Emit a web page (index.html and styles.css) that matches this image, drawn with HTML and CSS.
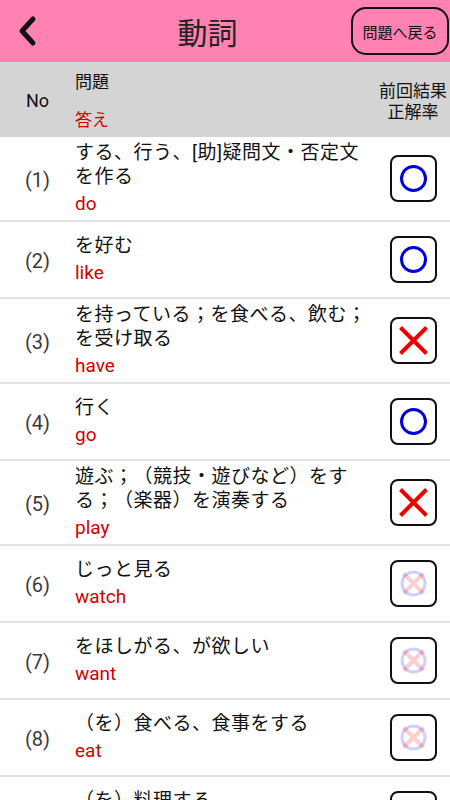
FILE: index.html
```html
<!DOCTYPE html>
<html lang="ja">

<head>
    <meta charset="UTF-8">
    <meta name="viewport" content="width=device-width, initial-scale=1.0">
    <title>動詞</title>
    <link rel="stylesheet" href="styles.css">
</head>

<body>

    <div class="topbar">
        <div class="back">
            <svg width="20" height="32" viewBox="0 0 20 32">
                <path d="M15 4 L4 16 L15 28" fill="none" stroke="#111" stroke-width="5" stroke-linecap="round"
                    stroke-linejoin="round" />
            </svg>
        </div>
        <div class="title">動詞</div>
        <button class="return-btn">問題へ戻る</button>
    </div>

    <div class="list-head">
        <div class="col-no">No</div>
        <div class="col-q">
            <div>問題</div>
            <div class="red">答え</div>
        </div>
        <div class="col-res">前回結果<br>正解率</div>
    </div>

    <div id="list"></div>

    <script>
        var words = [
            ["する、行う、[助]疑問文・否定文を作る", "do", "ok"],
            ["を好む", "like", "ok"],
            ["を持っている；を食べる、飲む；を受け取る", "have", "ng"],
            ["行く", "go", "ok"],
            ["遊ぶ；（競技・遊びなど）をする；（楽器）を演奏する", "play", "ng"],
            ["じっと見る", "watch", "none"],
            ["をほしがる、が欲しい", "want", "none"],
            ["（を）食べる、食事をする", "eat", "none"],
            ["（を）料理する", "cook", "none"]
        ];

        var circle = '<circle cx="23.5" cy="23.5" r="12" fill="none" stroke="#0000dd" stroke-width="3"/>';
        var cross = '<path d="M10.5 10.5 L36.5 36.5 M36.5 10.5 L10.5 36.5" stroke="#ee0000" stroke-width="4"/>';
        var faded = '<circle cx="23.5" cy="23.5" r="11.5" fill="none" stroke="#1010e0" stroke-width="3" opacity="0.2"/>' +
            '<path d="M13.5 13.5 L33.5 33.5 M33.5 13.5 L13.5 33.5" stroke="#f02030" stroke-width="4" opacity="0.22"/>';

        var html = '';
        words.forEach(function (w, i) {
            var mark = w[2] === 'ok' ? circle : (w[2] === 'ng' ? cross : faded);
            html += `<div class="row">
                <div class="col-no num">(${i + 1})</div>
                <div class="col-q">
                    <div class="question">${w[0]}</div>
                    <div class="answer">${w[1]}</div>
                </div>
                <div class="col-res">
                    <div class="mark"><svg width="47" height="47" viewBox="0 0 47 47">${mark}</svg></div>
                </div>
            </div>`;
        });
        document.getElementById('list').innerHTML = html;
    </script>

</body>

</html>
```

FILE: styles.css
```css
body {
    font-family: Roboto, "Noto Sans CJK JP", sans-serif;
    margin: 0;
    padding: 0;
    background-color: #fff;
    color: #111;
    text-spacing-trim: space-all;
}

.topbar {
    height: 62px;
    background-color: #ff82b2;
    display: flex;
    align-items: center;
}

.back {
    width: 60px;
    display: flex;
    padding-left: 18px;
    box-sizing: border-box;
}

.back svg {
    display: block;
}

.title {
    flex: 1;
    text-align: center;
    font-family: "Noto Sans CJK JP", sans-serif;
    font-size: 30px;
    color: #222;
    padding-left: 4px;
}

.return-btn {
    width: 98px;
    height: 48px;
    margin-right: 1px;
    background: transparent;
    border: 2px solid #111;
    border-radius: 15px;
    font-family: "Noto Sans CJK JP", sans-serif;
    font-size: 15px;
    color: #111;
    padding: 0;
}

.list-head {
    height: 75px;
    background-color: #d4d4d4;
    display: flex;
    align-items: center;
    font-family: "Noto Sans CJK JP", sans-serif;
}

.list-head .col-no {
    font-family: Roboto, sans-serif;
    font-size: 18px;
    padding-top: 2px;
}

.list-head .col-q {
    font-size: 17px;
    line-height: 20px;
    display: flex;
    flex-direction: column;
    gap: 18px;
}

.list-head .col-res {
    font-size: 17px;
    line-height: 21px;
    text-align: center;
    white-space: nowrap;
}

.red {
    color: #d00000;
}

.col-no {
    width: 75px;
    flex: none;
    text-align: center;
}

.col-q {
    width: 300px;
    flex: none;
}

.col-res {
    flex: 1;
    display: flex;
    justify-content: center;
    padding-left: 1px;
}

.row {
    display: flex;
    align-items: center;
    padding: 4px 0;
    border-bottom: 2px solid #e2e2e2;
}

.num {
    font-size: 20px;
    color: #3a3a3a;
    padding-top: 2px;
}

.question {
    font-size: 19px;
    line-height: 24px;
    letter-spacing: 0.5px;
    color: #111;
}

.answer {
    font-size: 19px;
    line-height: 24px;
    margin-top: 3px;
    color: #d00000;
}

.mark {
    width: 47px;
    height: 47px;
    margin: 10px 0;
    border: 2.5px solid #111;
    border-radius: 8px;
    box-sizing: border-box;
    overflow: hidden;
    display: flex;
    align-items: center;
    justify-content: center;
}

.mark svg {
    display: block;
    flex: none;
}
```
